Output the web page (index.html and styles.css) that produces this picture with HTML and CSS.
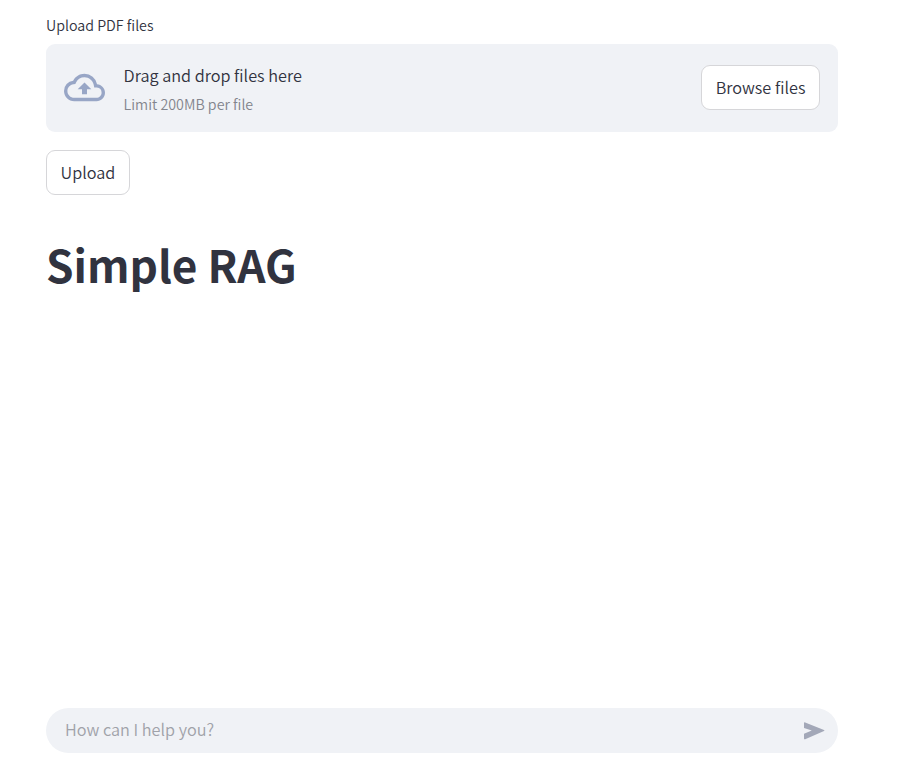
FILE: index.html
```html
<!DOCTYPE html>
<html lang="en">
<head>
<meta charset="utf-8">
<title>Simple RAG</title>
<link rel="stylesheet" href="styles.css">
</head>
<body>
<main class="page">
  <label class="label">Upload PDF files</label>
  <section class="dropzone">
    <svg class="cloud" viewBox="0 0 24 24" fill="currentColor"><path d="M19.35 10.04A7.49 7.49 0 0 0 12 4C9.11 4 6.6 5.64 5.35 8.04A5.994 5.994 0 0 0 0 14c0 3.31 2.69 6 6 6h13c2.76 0 5-2.24 5-5 0-2.64-2.05-4.78-4.65-4.96zM19 18H6c-2.21 0-4-1.79-4-4 0-2.05 1.53-3.76 3.56-3.97l1.07-.11.5-.95A5.469 5.469 0 0 1 12 6c2.62 0 4.88 1.86 5.39 4.43l.3 1.5 1.53.11A2.98 2.98 0 0 1 22 15c0 1.65-1.35 3-3 3zM8 13h2.55v3h2.9v-3H16l-4-4z"/></svg>
    <div class="hint">
      <span class="hint-title">Drag and drop files here</span>
      <span class="hint-limit">Limit 200MB per file</span>
    </div>
    <button class="button">Browse files</button>
  </section>
  <button class="button upload">Upload</button>
  <h1 class="title">Simple RAG</h1>
  <form class="chat">
    <span class="placeholder">How can I help you?</span>
    <svg class="send" viewBox="0 0 21 18" fill="currentColor"><path d="M0 1Q0 0 1.200.4L20 8q1 .5 0 1L1.200 17.200Q0 17.600 0 16.400V11.800L7.800 8.500 0 6z"/></svg>
  </form>
</main>
</body>
</html>
```
FILE: styles.css
```css
* { box-sizing: border-box; }
body {
  margin: 0;
  background: #fff;
  color: #31333f;
  font-family: "Noto Sans CJK SC", sans-serif;
  font-size: 16.25px;
  font-weight: 350;
}
.page {
  display: flex;
  flex-direction: column;
  align-items: flex-start;
  width: 792px;
  height: 753px;
  margin-left: 46px;
  padding-top: 13px;
}
.label { font-size: 14.25px; line-height: 24px; height: 31px; }
.dropzone {
  display: flex;
  align-items: center;
  width: 100%;
  height: 88px;
  padding: 0 18px 1px;
  border-radius: 9px;
  background: #f0f2f6;
}
.cloud { width: 41px; height: 41px; margin-right: 18.6px; color: #98a6c6; }
.hint { display: flex; flex-direction: column; flex: 1; padding-top: 5px; }
.hint-title { line-height: 27px; }
.hint-limit { font-size: 14.25px; line-height: 29px; color: #83858d; }
.button {
  height: 45px;
  padding: 0 13.6px 1px;
  border: 1px solid #d6d6d9;
  border-radius: 9px;
  background: #fff;
  color: inherit;
  font: inherit;
  line-height: 28px;
}
.upload { margin-top: 18px; }
.title { margin: 39px 0 0; font-size: 44.15px; line-height: 60px; font-weight: 700; }
.chat {
  display: flex;
  align-items: center;
  justify-content: space-between;
  width: 100%;
  height: 45px;
  margin-top: auto;
  padding: 0 13px 0 19px;
  border-radius: 23px;
  background: #f0f2f6;
}
.placeholder { padding-bottom: 4px; color: #a0a2a9; }
.send { width: 21px; height: 18px; color: #a3a8b8; }
```
